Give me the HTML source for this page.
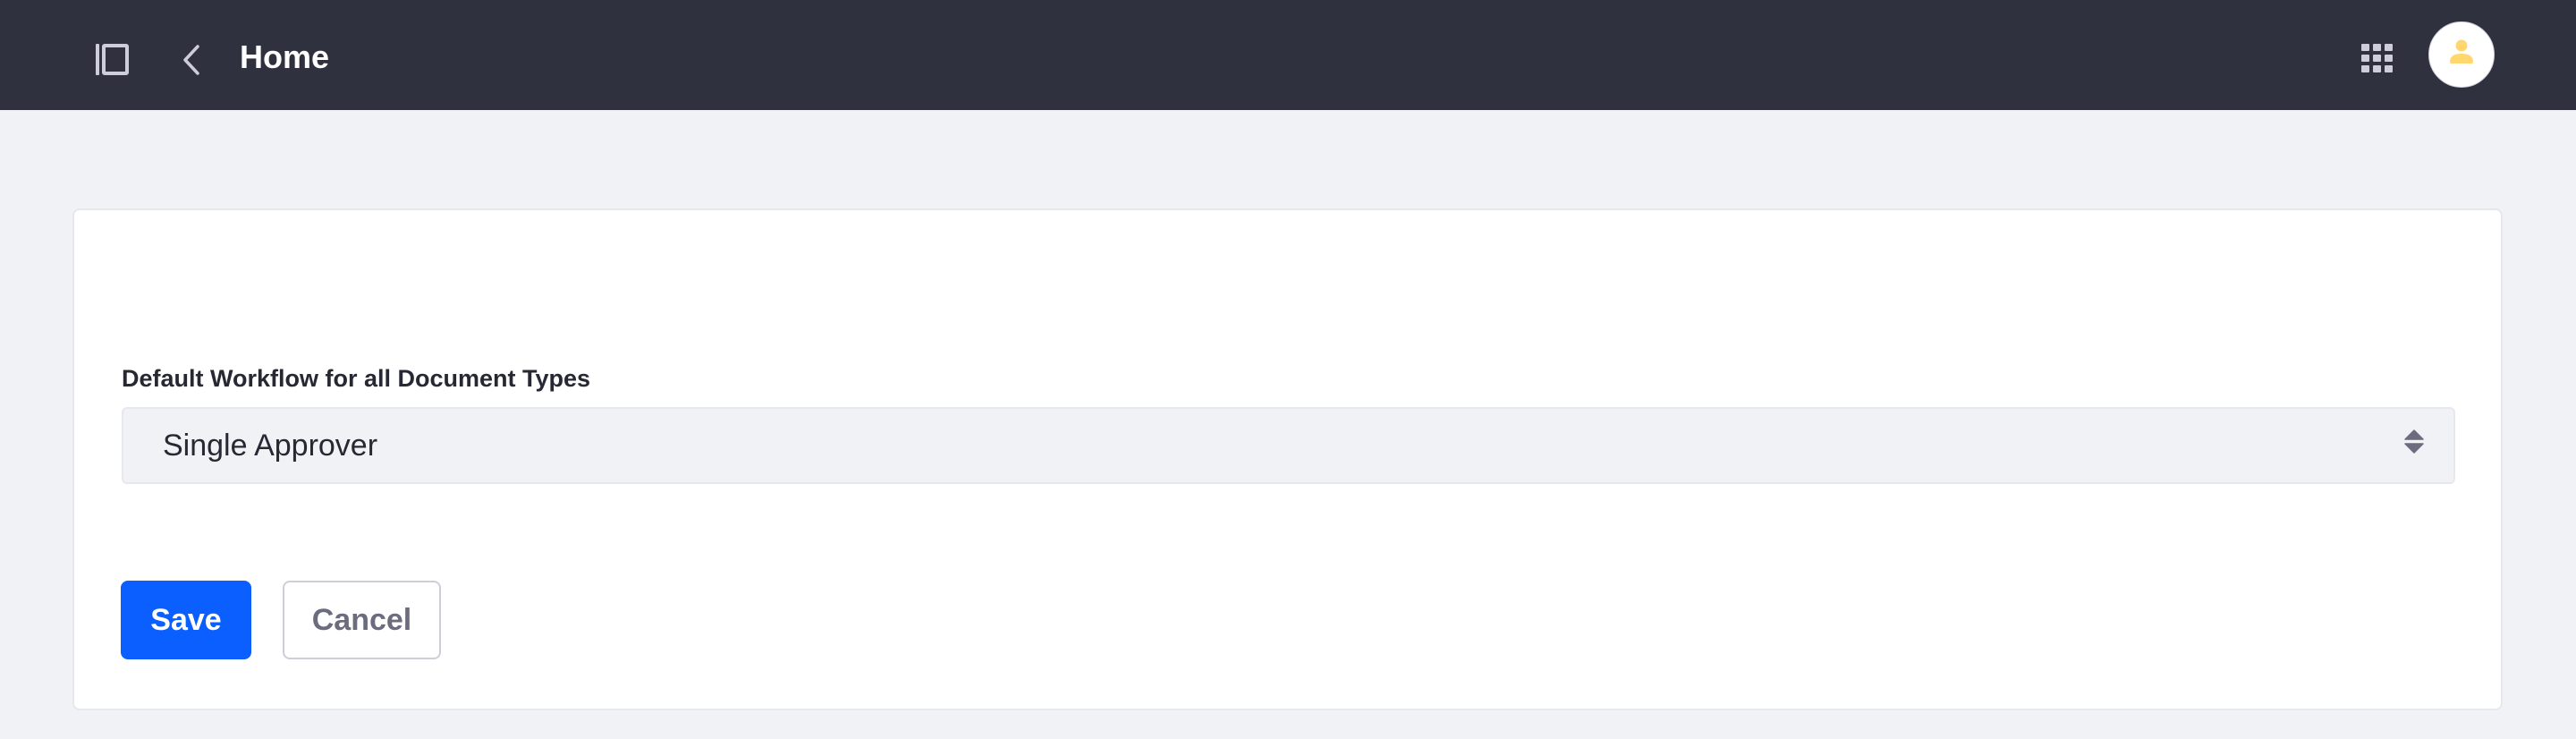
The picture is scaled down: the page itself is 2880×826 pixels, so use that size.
<!DOCTYPE html>
<html><head><meta charset="utf-8"><style>
*{margin:0;padding:0;box-sizing:border-box}
body{width:2880px;height:826px;background:#f1f2f5;font-family:"Liberation Sans",sans-serif;position:relative;overflow:hidden}
.hdr{position:absolute;left:0;top:0;width:2880px;height:123px;background:#30313f}
.abs{position:absolute}
.card{position:absolute;left:81px;top:233px;width:2717px;height:561px;background:#fff;border:2px solid #e7e7ed;border-radius:8px}
</style></head><body>
<div class="hdr">
<svg class="abs" style="left:105px;top:47px" width="40" height="40" viewBox="0 0 40 40">
<rect x="2" y="2" width="4" height="35" rx="1" fill="#cdced9"/>
<rect x="11" y="4" width="26" height="31" fill="none" stroke="#cdced9" stroke-width="4" rx="1"/>
</svg>
<svg class="abs" style="left:200px;top:48px" width="28" height="38" viewBox="0 0 28 38">
<path d="M21 4 L7 19 L21 34" fill="none" stroke="#cdced9" stroke-width="3.5" stroke-linecap="round" stroke-linejoin="round"/>
</svg>
<div class="abs" style="left:268px;top:40px;font-size:36px;font-weight:bold;color:#fff;line-height:48px">Home</div>
<svg class="abs" style="left:2639px;top:48px" width="38" height="34" viewBox="0 0 38 34">
<g fill="#cdced9">
<rect x="1" y="1" width="9" height="8" rx="1"/><rect x="14" y="1" width="9" height="8" rx="1"/><rect x="27" y="1" width="9" height="8" rx="1"/>
<rect x="1" y="13" width="9" height="8" rx="1"/><rect x="14" y="13" width="9" height="8" rx="1"/><rect x="27" y="13" width="9" height="8" rx="1"/>
<rect x="1" y="25" width="9" height="8" rx="1"/><rect x="14" y="25" width="9" height="8" rx="1"/><rect x="27" y="25" width="9" height="8" rx="1"/>
</g></svg>
<div class="abs" style="left:2715px;top:24px;width:74px;height:74px;border-radius:50%;background:#fff;border:1px solid #cdced9"></div>
<svg class="abs" style="left:2735px;top:44px" width="34" height="32" viewBox="0 0 34 32">
<circle cx="17" cy="7" r="6.5" fill="#ffd76e"/>
<path d="M4 25 Q4 16 17 16 Q30 16 30 25 Q30 27 28 27 L6 27 Q4 27 4 25Z" fill="#ffd76e"/>
</svg>
</div>
<div class="card"></div>
<div class="abs" style="left:136px;top:405px;font-size:27px;font-weight:bold;color:#272833;line-height:36px">Default Workflow for all Document Types</div>
<div class="abs" style="left:136px;top:455px;width:2609px;height:86px;background:#f1f2f5;border:2px solid #e7e7ed;border-radius:6px"></div>
<div class="abs" style="left:182px;top:476px;font-size:34px;color:#272833;line-height:44px">Single Approver</div>
<svg class="abs" style="left:2688px;top:480px" width="22" height="30" viewBox="0 0 22 30">
<path d="M1 11 L11 1 L21 11 Z" fill="#6b6c7e" stroke="#6b6c7e" stroke-width="1.5" stroke-linejoin="round"/>
<path d="M1 16 L21 16 L11 26 Z" fill="#6b6c7e" stroke="#6b6c7e" stroke-width="1.5" stroke-linejoin="round"/>
</svg>
<div class="abs" style="left:135px;top:649px;width:146px;height:88px;background:#0b5fff;border-radius:8px;color:#fff;font-size:34px;font-weight:bold;text-align:center;line-height:88px">Save</div>
<div class="abs" style="left:316px;top:649px;width:177px;height:88px;background:#fff;border:2px solid #cdced9;border-radius:8px;color:#6b6c7e;font-size:34px;font-weight:bold;text-align:center;line-height:84px">Cancel</div>
</body></html>
